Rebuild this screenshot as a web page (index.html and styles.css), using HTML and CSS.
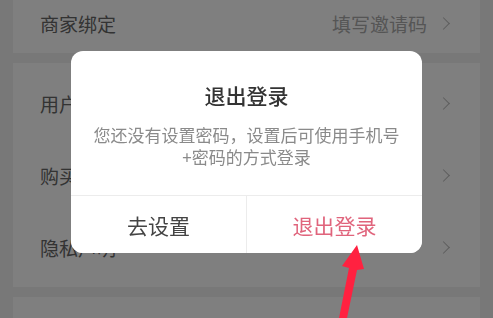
FILE: index.html
```html
<!DOCTYPE html>
<html lang="zh-CN">

<head>
    <meta charset="UTF-8">
    <meta name="viewport" content="width=device-width, initial-scale=1.0">
    <title>设置</title>
    <link rel="stylesheet" href="styles.css">
</head>

<body>
    <div class="page">
        <div class="card card-top">
            <div class="row">
                <span class="label">商家绑定</span>
                <span class="value">填写邀请码</span>
                <span class="chevron"></span>
            </div>
        </div>

        <div class="card card-list">
            <div class="row">
                <span class="label">用户协议</span>
                <span class="chevron"></span>
            </div>
            <div class="row">
                <span class="label">购买须知</span>
                <span class="chevron"></span>
            </div>
            <div class="row">
                <span class="label">隐私声明</span>
                <span class="chevron"></span>
            </div>
        </div>

        <div class="card card-bottom"></div>
    </div>

    <!-- 遮罩 + 弹窗 -->
    <div class="mask">
        <div class="dialog">
            <div class="dialog-body">
                <h3>退出登录</h3>
                <p>您还没有设置密码，设置后可使用手机号<br>+密码的方式登录</p>
            </div>
            <div class="dialog-buttons">
                <button class="btn-set">去设置</button>
                <button class="btn-logout">退出登录</button>
            </div>
        </div>
    </div>

    <!-- 红色箭头标注 -->
    <svg class="arrow" width="493" height="318" viewBox="0 0 493 318">
        <polygon points="357,245 364,269 357,270 347,318 339,318 349,268 342,266" fill="#ff2140" />
    </svg>
</body>
</html>
```

FILE: styles.css
```css
body {
    margin: 0;
    padding: 0;
    background-color: #f0f0f0;
    font-family: "Noto Sans CJK SC", "Noto Sans", sans-serif;
    overflow: hidden;
}

.page {
    display: flex;
    flex-direction: column;
    gap: 10px;
    padding: 0 13px;
}

.card {
    background-color: #fff;
}

.card-top {
    margin-top: -7px;
}

.card-list {
    padding: 4px 0;
}

.card-bottom {
    height: 23px;
}

.row {
    display: flex;
    align-items: center;
    height: 60px;
    padding: 0 30px 0 27px;
}

.card-list .row {
    height: 72px;
}

.row .label {
    flex: 1;
    font-size: 19px;
    color: #666;
}

.row .value {
    font-size: 19px;
    color: #aaa;
    margin-right: 12px;
}

.row .chevron {
    width: 8px;
    height: 8px;
    border-top: 1px solid #bbb;
    border-right: 1px solid #bbb;
    transform: rotate(45deg);
    margin-right: 2px;
}

/* 遮罩 */
.mask {
    position: fixed;
    top: 0;
    left: 0;
    right: 0;
    bottom: 0;
    background-color: rgba(0, 0, 0, 0.5);
    display: flex;
    justify-content: center;
    align-items: flex-start;
    padding-top: 51px;
}

.dialog {
    width: 351px;
    background-color: #fff;
    border-radius: 12px;
    overflow: hidden;
}

.dialog-body {
    text-align: center;
    padding: 30px 16px 27px;
    border-bottom: 1px solid #ececec;
}

.dialog-body h3 {
    margin: 0;
    font-size: 21px;
    font-weight: 500;
    line-height: 29px;
    color: #333;
}

.dialog-body p {
    margin: 14px 0 0;
    font-size: 17px;
    line-height: 22px;
    color: #8a8a8a;
}

.dialog-buttons {
    display: flex;
}

.dialog-buttons button {
    flex: 1;
    height: 57px;
    border: none;
    background-color: #fff;
    font-family: inherit;
    font-size: 21px;
    cursor: pointer;
}

.dialog-buttons .btn-set {
    color: #444;
    border-right: 1px solid #ececec;
}

.dialog-buttons .btn-logout {
    color: #e0647c;
}

.arrow {
    position: absolute;
    top: 0;
    left: 0;
    pointer-events: none;
}
```
